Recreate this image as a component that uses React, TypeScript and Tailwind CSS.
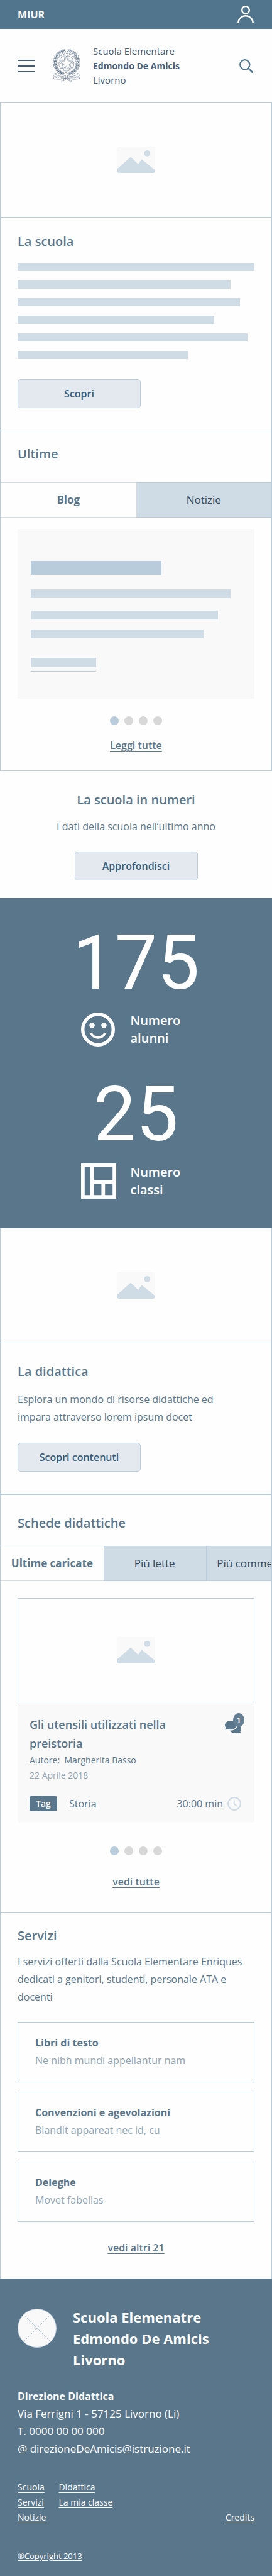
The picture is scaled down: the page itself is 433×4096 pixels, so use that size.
import { FaComments } from "react-icons/fa";

function UserIcon() {
  return (
    <svg viewBox="0 0 26 28" className="h-7 w-[26px]" fill="none" stroke="currentColor" strokeWidth="2.4" aria-hidden="true">
      <ellipse cx="13" cy="7" rx="5.8" ry="6" />
      <path d="M1.2 28a11.8 11.8 0 0 1 23.6 0" />
    </svg>
  );
}

function SearchIcon() {
  return (
    <svg viewBox="0 0 22 22" className="size-[22px]" fill="none" stroke="currentColor" strokeWidth="2.2" aria-hidden="true">
      <circle cx="8.8" cy="8.8" r="7.6" />
      <path d="m14.2 14.4 7 7" strokeWidth="2.6" />
    </svg>
  );
}

const polar = (r: number, deg: number) => {
  const a = ((deg - 90) * Math.PI) / 180;
  return `${(146 + r * Math.cos(a)).toFixed(1)} ${(143 + r * Math.sin(a)).toFixed(1)}`;
};
const tips = [0, 72, 144, 216, 288];
const starPath = "M" + tips.map((d) => `${polar(61, d)}L${polar(24, d + 36)}`).join("L") + "Z";
const sectorPath = tips.map((d) => `M${polar(32, d + 36)}L${polar(64, d + 8)}A64 64 0 0 1 ${polar(64, d + 64)}Z`).join("");
const gearPath =
  "M" +
  Array.from({ length: 20 }, (_, i) => i * 18)
    .map((d) => `${polar(78, d)}L${polar(78, d + 7)}L${polar(87, d + 9)}L${polar(87, d + 16)}`)
    .join("L") +
  "Z";
const leaves = Array.from({ length: 10 }, (_, i) => {
  const deg = 202 + i * 16;
  const a = ((deg - 90) * Math.PI) / 180;
  return { x: 146 + 98 * Math.cos(a), y: 135 + 100 * Math.sin(a), deg };
});

function Emblem() {
  return (
    <svg viewBox="27 26 241 274" className="h-[53px] w-[46px] text-[#455b73]" fill="none" stroke="currentColor" strokeWidth="2.6" strokeLinejoin="round" role="img" aria-label="Repubblica Italiana">
      <path d={starPath} />
      <path d={sectorPath} />
      <path d={gearPath} />
      {leaves.map((l) => (
        <g key={l.deg}>
          <g transform={`translate(${l.x} ${l.y}) rotate(${l.deg})`}>
            <path d="M-14 8C-22-4 -8-14 12-14C8 0 0 10-14 8Z" />
            <path d="M-14-4C-10 8 2 16 16 12C14 2 2-6-14-4Z" />
            <path d="M-16 2 14 0" />
          </g>
          <g transform={`translate(${292 - l.x} ${l.y}) rotate(${-l.deg})`}>
            <path d="M14 8C16 2 24 2 20-5C16-10 12-6 8-12C2-14-6-16-12-12C-8-6-8 0-2 2C4 8 8 6 14 8Z" />
            <path d="M14-4C12 4 8 4 4 10C-2 10-6 18-16 12C-14 6-8 4-6-2C0-4 6-8 14-4Z" />
          </g>
        </g>
      ))}
      <path d="M34 232 60 226 56 236Q96 262 138 246V264Q92 286 38 270L44 254Z" className="fill-white" />
      <path d="M260 232 234 226 238 236Q198 262 156 246V264Q202 286 256 270L250 254Z" className="fill-white" />
      <path d="M138 244Q147 236 156 244V266Q147 274 138 266Z" className="fill-white" />
      <path d="M140 268 104 292 112 299 147 272 184 299 192 292 154 268" />
      <g fill="currentColor" stroke="none" fontFamily="Liberation Serif, serif" fontSize="19">
        <text x="50" y="264" transform="rotate(6 50 264)">REPVBBLICA</text>
        <text x="166" y="272" transform="rotate(-7 166 272)">ITALIANA</text>
      </g>
    </svg>
  );
}

function PictureIcon() {
  return (
    <svg viewBox="0 0 61 42" className="h-[42px] w-[61px]" aria-hidden="true">
      <rect width="61" height="42" rx="4" fill="#f9f9f9" />
      <circle cx="48.3" cy="10.8" r="4.9" fill="#cfdce5" />
      <path d="M0 36 22.1 16.4 34 28 39.5 20.3 61 37.6V38a4 4 0 0 1-4 4H4a4 4 0 0 1-4-4Z" fill="#cfdce5" />
    </svg>
  );
}

function SmileIcon() {
  return (
    <svg viewBox="0 0 54 54" className="size-[54px]" aria-hidden="true">
      <circle cx="27" cy="27" r="24.3" fill="none" stroke="currentColor" strokeWidth="5.4" />
      <circle cx="17.6" cy="20.4" r="4.2" fill="currentColor" />
      <circle cx="36.4" cy="20.4" r="4.2" fill="currentColor" />
      <path d="M13.3 32.2C16 38 21 41.7 27 41.7S38.3 38 40.7 32.2H36.5C34.3 35.5 31.3 37.6 27 37.6S19.7 35.5 17.5 32.2Z" fill="currentColor" />
    </svg>
  );
}

function ClassroomIcon() {
  return (
    <svg viewBox="0 0 56 56" className="size-[56px]" aria-hidden="true">
      <path
        fill="currentColor"
        fillRule="evenodd"
        d="M0 0H56V56H0ZM5.8 5.8V50.2H15V5.8ZM20.8 5.8V26.8H50.2V5.8ZM20.8 32.4V50.2H32.4V32.4ZM38.2 32.4V50.2H50.2V32.4Z"
      />
    </svg>
  );
}

function ClockIcon() {
  return (
    <svg viewBox="0 0 22 22" className="size-[22px] text-[#cfdce5]" fill="none" stroke="currentColor" strokeWidth="2" aria-hidden="true">
      <circle cx="11" cy="11" r="9.9" />
      <path d="M10.8 5.5v6l5.2 3.5" />
    </svg>
  );
}

function CrossedCircle() {
  return (
    <svg viewBox="0 0 62 62" className="mt-1 size-[62px] shrink-0" stroke="#b9ccdb" aria-hidden="true">
      <circle cx="31" cy="31" r="30.5" fill="#f9f9f9" />
      <path d="M9.5 9.5 52.5 52.5M52.5 9.5 9.5 52.5" />
    </svg>
  );
}

function PictureBox() {
  return (
    <div className="flex h-[184px] items-center justify-center border-y border-[#b9ccdb]">
      <PictureIcon />
    </div>
  );
}

function Heading({ children }: { children: string }) {
  return <h2 className="text-xl leading-7 font-semibold">{children}</h2>;
}

function ActionButton({ children }: { children: string }) {
  return (
    <button type="button" className="h-[46px] w-[196px] rounded-[5px] border border-[#b9ccdb] bg-[#e4e9f0] text-base font-semibold text-[#355d7a]">
      {children}
    </button>
  );
}

function MoreLink({ children }: { children: string }) {
  return (
    <a href="#" className="text-base leading-6 font-semibold underline decoration-1 underline-offset-3">
      {children}
    </a>
  );
}

function Dots() {
  return (
    <div className="flex justify-center gap-[9px]">
      {[1, 2, 3, 4].map((n) => (
        <button key={n} type="button" aria-label={`Pagina ${n}`} className={n === 1 ? "size-3.5 rounded-full bg-[#b9ccdb]" : "size-3.5 rounded-full bg-[#d8d8d8]"} />
      ))}
    </div>
  );
}

function Stat({ value, icon, lines }: { value: string; icon: React.ReactNode; lines: [string, string] }) {
  return (
    <div className="flex flex-col gap-[18px]">
      <p className="text-center font-[Roboto,sans-serif] text-[120px] leading-[120px]">{value}</p>
      <div className="mx-auto flex w-[176px] items-center gap-[23px]">
        <div className="flex w-[56px] shrink-0">{icon}</div>
        <p className="text-xl leading-7 font-semibold">
          {lines[0]}
          <br />
          {lines[1]}
        </p>
      </div>
    </div>
  );
}

const services = [
  ["Libri di testo", "Ne nibh mundi appellantur nam"],
  ["Convenzioni e agevolazioni", "Blandit appareat nec id, cu"],
  ["Deleghe", "Movet fabellas"],
];

export default function App() {
  return (
    <div className="w-full overflow-x-hidden bg-[#fefefe] font-['Open_Sans','Noto_Sans',sans-serif] text-[#5a768b]">
      <div className="flex h-[46px] items-center justify-between bg-[#51758d] pr-[29px] pl-7 text-white">
        <a href="#" className="text-base font-bold">MIUR</a>
        <button type="button" aria-label="Accedi">
          <UserIcon />
        </button>
      </div>

      <header className="flex items-center pt-6 pr-[30px] pb-[23px] pl-7 text-[#455b73]">
        <button type="button" aria-label="Menu" className="flex w-7 flex-col gap-[7px]">
          <span className="h-[2px] w-full bg-current" />
          <span className="h-[2px] w-full bg-current" />
          <span className="h-[2px] w-full bg-current" />
        </button>
        <div className="ml-[27px]">
          <Emblem />
        </div>
        <p className="ml-[19px] grow text-[15px] leading-[23px]">
          Scuola Elementare
          <br />
          <b className="text-sm leading-[23px] font-bold">Edmondo De Amicis</b>
          <br />
          Livorno
        </p>
        <button type="button" aria-label="Cerca" className="text-[#51758d]">
          <SearchIcon />
        </button>
      </header>

      <main>
        <div className="border-x border-b border-[#b9ccdb]">
          <PictureBox />
          <section className="border-b border-[#b9ccdb] px-[27px] pt-6 pb-9">
            <Heading>La scuola</Heading>
            <div className="mt-5 flex flex-col gap-[15px]">
              <div className="h-[13px] bg-[#cfdce5]" />
              <div className="h-[13px] w-[90%] bg-[#cfdce5]" />
              <div className="h-[13px] w-[94%] bg-[#cfdce5]" />
              <div className="h-[13px] w-[83%] bg-[#cfdce5]" />
              <div className="h-[13px] w-[97%] bg-[#cfdce5]" />
              <div className="h-[13px] w-[72%] bg-[#cfdce5]" />
            </div>
            <div className="mt-8 flex">
              <ActionButton>Scopri</ActionButton>
            </div>
          </section>

          <section>
            <div className="px-[27px] pt-[22px] pb-[31px]">
              <Heading>Ultime</Heading>
            </div>
            <div role="tablist" className="flex h-14">
              <button type="button" role="tab" aria-selected="true" className="w-1/2 border-y border-[#cfdce5] text-[17px] font-bold">Blog</button>
              <button type="button" role="tab" aria-selected="false" className="w-1/2 border-y border-[#b9ccdb] bg-[#cfdce5] text-[17px] text-[#34495c]">Notizie</button>
            </div>
            <div className="flex flex-col px-[27px] pt-[18px] pb-7">
              <div className="flex flex-col bg-[#f9f9f9] px-[21px] pt-[51px] pb-[43px]">
                <div className="h-[22px] w-[62%] bg-[#b9ccdb]" />
                <div className="mt-[23px] h-3.5 w-[95%] bg-[#cfdce5]" />
                <div className="mt-5 h-3.5 w-[89%] bg-[#cfdce5]" />
                <div className="mt-4 h-3.5 w-[82%] bg-[#cfdce5]" />
                <div className="mt-[31px] h-[15px] w-[31%] bg-[#cfdce5]" />
                <div className="mt-1.5 h-px w-[31%] bg-[#b9ccdb]" />
              </div>
              <div className="mt-7">
                <Dots />
              </div>
              <div className="mt-5 flex justify-center">
                <MoreLink>Leggi tutte</MoreLink>
              </div>
            </div>
          </section>
        </div>

        <section className="flex flex-col items-center px-7 pt-8 pb-7 text-center">
          <Heading>La scuola in numeri</Heading>
          <p className="mt-3.5 text-base leading-7">I dati della scuola nell’ultimo anno</p>
          <div className="mt-[26px] flex">
            <ActionButton>Approfondisci</ActionButton>
          </div>
        </section>

        <section className="flex flex-col gap-[47px] bg-[#5a768b] pt-[43px] pb-[46px] text-white">
          <Stat value="175" icon={<SmileIcon />} lines={["Numero", "alunni"]} />
          <Stat value="25" icon={<ClassroomIcon />} lines={["Numero", "classi"]} />
        </section>

        <div className="border-x border-b border-[#b9ccdb]">
          <PictureBox />
          <section className="border-b-2 border-[#b9ccdb] px-[27px] pt-[31px] pb-[35px]">
            <Heading>La didattica</Heading>
            <p className="mt-4 max-w-[340px] text-base leading-7">Esplora un mondo di risorse didattiche ed impara attraverso lorem ipsum docet</p>
            <div className="mt-[27px] flex">
              <ActionButton>Scopri contenuti</ActionButton>
            </div>
          </section>

          <section className="border-b border-[#b9ccdb]">
            <div className="px-[27px] pt-[31px] pb-[22px]">
              <Heading>Schede didattiche</Heading>
            </div>
            <div role="tablist" className="flex h-14 overflow-hidden">
              <button type="button" role="tab" aria-selected="true" className="w-[38%] shrink-0 border-y border-[#cfdce5] text-[17px] font-bold">Ultime caricate</button>
              <button type="button" role="tab" aria-selected="false" className="w-[38%] shrink-0 border-y border-r border-[#b9ccdb] bg-[#cfdce5] text-[17px] text-[#34495c]">Più lette</button>
              <button type="button" role="tab" aria-selected="false" className="w-[38%] shrink-0 border-y border-[#b9ccdb] bg-[#cfdce5] text-[17px] whitespace-nowrap text-[#34495c]">Più commentate</button>
            </div>
            <div className="flex flex-col px-[27px] pt-[27px] pb-9">
              <article>
                <div className="flex h-[166px] items-center justify-center border border-[#b9ccdb]">
                  <PictureIcon />
                </div>
                <div className="mt-px rounded-[5px] bg-[#f9f9f9] pt-[19px] pr-[21px] pb-[18px] pl-[19px]">
                  <div className="flex items-start justify-between">
                    <h3 className="max-w-[250px] text-lg leading-[30px] font-semibold">Gli utensili utilizzati nella preistoria</h3>
                    <div className="relative mt-1.5">
                      <FaComments className="size-[26px]" aria-hidden="true" />
                      <span className="absolute -top-[9px] -right-[5px] flex h-[22px] w-[18px] items-center justify-center rounded-[50%] bg-[#647f93] text-[11px] font-bold text-white">1</span>
                    </div>
                  </div>
                  <p className="text-sm leading-6 whitespace-pre">Autore:  Margherita Basso</p>
                  <p className="text-sm leading-6 text-[#91a5b4]">22 Aprile 2018</p>
                  <div className="mt-[21px] flex h-6 items-center">
                    <span className="flex h-6 w-11 items-center justify-center rounded-[3px] bg-[#5a768b] text-sm font-semibold text-white">Tag</span>
                    <span className="ml-[19px] grow text-base leading-6">Storia</span>
                    <span className="mr-[7px] text-base leading-6">30:00 min</span>
                    <ClockIcon />
                  </div>
                </div>
              </article>
              <div className="mt-[38px]">
                <Dots />
              </div>
              <div className="mt-[30px] flex justify-center">
                <MoreLink>vedi tutte</MoreLink>
              </div>
            </div>
          </section>

          <section className="px-[27px] pt-[23px] pb-[37px]">
            <Heading>Servizi</Heading>
            <p className="mt-[13px] text-base leading-7">I servizi offerti dalla Scuola Elementare Enriques dedicati a genitori, studenti, personale ATA e docenti</p>
            <ul className="mt-[26px] flex flex-col gap-[15px]">
              {services.map(([title, text]) => (
                <li key={title} className="border border-[#b9ccdb] px-[27px] pt-[18px] pb-5 text-base leading-7">
                  <h3 className="font-bold">{title}</h3>
                  <p className="text-[#91a5b4]">{text}</p>
                </li>
              ))}
            </ul>
            <div className="mt-[29px] flex justify-center">
              <MoreLink>vedi altri 21</MoreLink>
            </div>
          </section>
        </div>
      </main>

      <footer className="bg-[#5a768b] px-7 pt-[43px] pb-[22px] text-white">
        <div className="flex gap-[26px]">
          <CrossedCircle />
          <p className="text-[22px] leading-[34px] font-bold">
            Scuola Elemenatre
            <br />
            Edmondo De Amicis
            <br />
            Livorno
          </p>
        </div>
        <address className="mt-[27px] text-[17px] leading-7 not-italic">
          <p className="text-base leading-7 font-bold">Direzione Didattica</p>
          <p>Via Ferrigni 1 - 57125 Livorno (Li)</p>
          <p>T. 0000 00 00 000</p>
          <p>@ direzioneDeAmicis@istruzione.it</p>
        </address>
        <nav className="mt-[35px] flex items-end justify-between text-sm leading-6">
          <div className="flex items-start gap-5 underline underline-offset-3">
            <div className="flex flex-col">
              <a href="#">Scuola</a>
              <a href="#">Servizi</a>
              <a href="#">Notizie</a>
            </div>
            <div className="flex flex-col">
              <a href="#">Didattica</a>
              <a href="#">La mia classe</a>
            </div>
          </div>
          <a href="#" className="underline underline-offset-3">Credits</a>
        </nav>
        <div className="mt-[39px] flex">
          <a href="#" className="text-[13px] leading-5 underline underline-offset-2">®Copyright 2013</a>
        </div>
      </footer>
    </div>
  );
}
